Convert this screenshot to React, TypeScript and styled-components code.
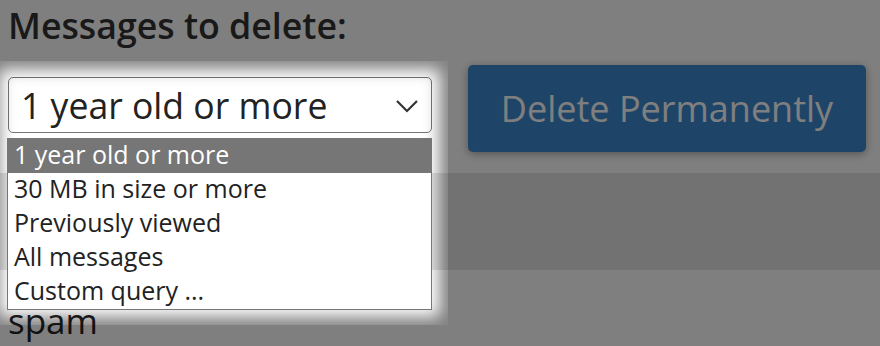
import React from "react";
import styled, { createGlobalStyle } from "styled-components";

const GlobalStyle = createGlobalStyle`
  html, body {
    margin: 0;
    padding: 0;
    background: #ffffff;
  }
  body {
    font-family: "Open Sans", "Noto Sans", sans-serif;
    color: #333333;
    overflow: hidden;
  }
`;

const Page = styled.div`
  position: relative;
  width: 880px;
  height: 346px;
  overflow: hidden;
  padding: 0 8px;
  box-sizing: border-box;
`;

const Heading = styled.h2`
  margin: 0;
  padding-top: 2px;
  font-size: 35.7px;
  font-weight: 600;
  line-height: 46px;
  color: #333333;
`;

const Row = styled.div`
  display: flex;
  align-items: flex-start;
  margin-top: 17px;
`;

const SelectBox = styled.div`
  position: relative;
  margin-top: 12px;
  width: 424px;
  height: 56px;
  box-sizing: border-box;
  border: 1px solid #767676;
  border-radius: 5px;
  background: #ffffff;
  display: flex;
  align-items: center;
  justify-content: space-between;
  padding: 0 12px 0 12px;
  font-size: 35.6px;
  color: #222222;
`;

const Chevron = styled.svg`
  width: 24px;
  height: 14px;
  margin-top: 2px;
`;

const Button = styled.button`
  margin-left: 36px;
  width: 398px;
  height: 87px;
  border: none;
  border-radius: 5px;
  background: #3c8ad0;
  color: #ffffff;
  font-family: inherit;
  font-size: 36px;
  box-shadow: 0 2px 8px rgba(0, 0, 0, 0.35);
`;

const Band = styled.div`
  margin: 21px -8px 0;
  height: 97px;
  background: #e4e4e4;
`;

const Spam = styled.div`
  margin-top: 31px;
  font-size: 35px;
  line-height: 40px;
  color: #222222;
`;

const Spotlight = styled.div`
  position: absolute;
  left: -9px;
  top: 61px;
  width: 457px;
  height: 264px;
  pointer-events: none;
  box-shadow: inset 0 0 16px 8px rgba(0, 0, 0, 0.5),
    0 0 0 2000px rgba(0, 0, 0, 0.5);
  z-index: 1;
`;

const ListBox = styled.ul`
  position: absolute;
  left: 7px;
  top: 138px;
  width: 425px;
  margin: 0;
  padding: 0;
  list-style: none;
  box-sizing: border-box;
  border: 1px solid #767676;
  background: #ffffff;
  z-index: 2;
`;

const Option = styled.li<{ $active?: boolean }>`
  height: 34px;
  line-height: 31px;
  padding-left: 6px;
  font-size: 25px;
  color: ${(p) => (p.$active ? "#ffffff" : "#222222")};
  background: ${(p) => (p.$active ? "#767676" : "transparent")};
`;

const options = [
  "1 year old or more",
  "30 MB in size or more",
  "Previously viewed",
  "All messages",
  "Custom query ...",
];

export default function App() {
  return (
    <>
      <GlobalStyle />
      <Page>
        <Heading>Messages to delete:</Heading>
        <Row>
          <SelectBox>
            <span>1 year old or more</span>
            <Chevron viewBox="0 0 24 14">
              <polyline
                points="2,2 12,12 22,2"
                fill="none"
                stroke="#333333"
                strokeWidth="2.2"
              />
            </Chevron>
          </SelectBox>
          <Button>Delete Permanently</Button>
        </Row>
        <Band />
        <Spam>spam</Spam>
        <Spotlight />
        <ListBox>
          {options.map((o, i) => (
            <Option key={o} $active={i === 0}>
              {o}
            </Option>
          ))}
        </ListBox>
      </Page>
    </>
  );
}
